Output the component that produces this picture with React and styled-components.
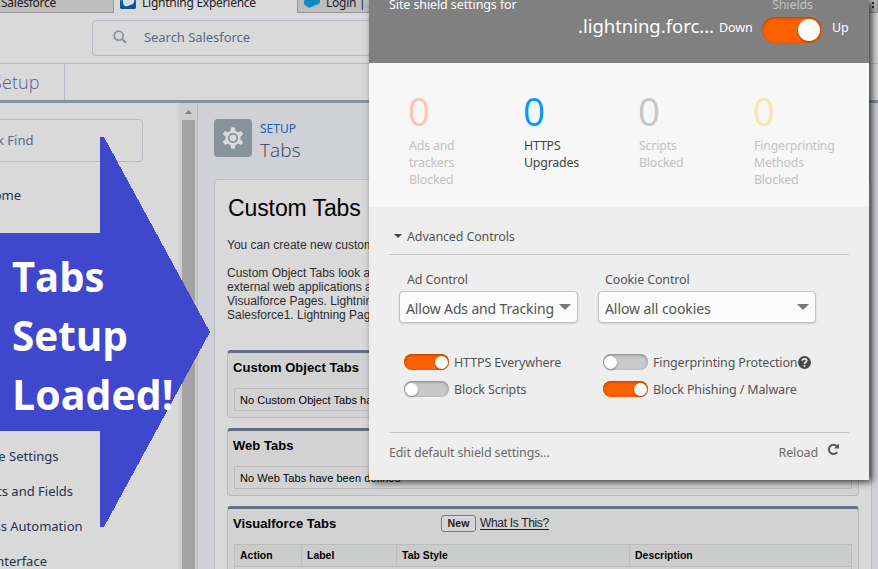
import React from "react";
import styled, { createGlobalStyle, css } from "styled-components";

const GlobalStyle = createGlobalStyle`
  * { box-sizing: border-box; }
  html, body { margin: 0; padding: 0; overflow: hidden; }
  button { font: inherit; }
`;

const ui = '"Noto Sans", "Open Sans", sans-serif';
const arial = '"Liberation Sans", Arial, sans-serif';

const Page = styled.div`
  position: relative;
  display: flex;
  flex-direction: column;
  width: 878px;
  height: 569px;
  overflow: hidden;
  background: #d9d9d9;
  font-family: ${ui};
  white-space: nowrap;
`;

/* Browser tabs */
const TabStrip = styled.div`
  display: flex;
  flex: none;
  height: 13px;
`;
const BrowserTab = styled.div`
  display: flex;
  flex: none;
  align-items: flex-end;
  gap: 6px;
  width: ${(p) => p.$w}px;
  height: 13px;
  padding: 0 0 2px ${(p) => p.$pad}px;
  overflow: hidden;
  color: #1b1b1b;
  font: 12px/17px ${ui};
  letter-spacing: -0.25px;
  ${(p) =>
    !p.$active &&
    css`
      background: #bdbdbd;
      border: solid #999;
      border-width: 0 1px 1px ${p.$first ? 0 : 1}px;
      padding-bottom: 1px;
    `}
  svg { flex: none; margin-bottom: 2px; }
`;
const WindowMenu = styled.svg`
  margin-left: auto;
`;

/* Global header */
const SearchRow = styled.div`
  flex: none;
  height: 51px;
  padding: 7px 0 0 92px;
  border-bottom: 1px solid #b3b9c8;
`;
const SearchBox = styled.div`
  display: flex;
  align-items: center;
  gap: 17px;
  width: 520px;
  height: 36px;
  padding: 0 0 2px 20px;
  border: 1px solid #b1b8c8;
  border-radius: 4px;
  color: #5a6a8c;
  font-size: 13px;
  letter-spacing: -0.05px;
`;
const NavRow = styled.div`
  flex: none;
  height: 39px;
  border-bottom: 3px solid #87929a;
`;
const NavName = styled.div`
  width: 65px;
  height: 36px;
  border-right: 1px solid #b3b9c8;
  color: #52648a;
  font: 300 18px/36px "Open Sans", sans-serif;
  letter-spacing: 0.1px;
  span { margin-left: -8px; }
`;

/* Body */
const Body = styled.div`
  display: flex;
  flex: 1;
  min-height: 0;
`;
const Sidebar = styled.div`
  width: 178px;
  padding-top: 16px;
  overflow: hidden;
`;
const QuickFind = styled.div`
  width: 163px;
  height: 43px;
  margin-left: -20px;
  padding-left: 16px;
  border: 1px solid #b5bcc4;
  border-radius: 4px;
  color: #54698d;
  font-size: 13px;
  line-height: 41px;
`;
const SideList = styled.div`
  padding-top: 16px;
  color: #22334f;
  font-size: 13px;
`;
const SideItem = styled.div`
  height: 35px;
  margin-left: ${(p) => p.$shift || 0}px;
  margin-top: ${(p) => p.$gap || 0}px;
  line-height: 35px;
`;
const Scrollbar = styled.div`
  display: flex;
  flex: none;
  flex-direction: column;
  align-items: center;
  width: 20px;
  padding: 7px 1px 0 0;
  border-left: 2px solid #cfd1d7;
  border-right: 1px solid #b6bbc0;
  background: #cdcdcd;
  svg { flex: none; }
`;
const ScrollThumb = styled.div`
  flex: 1;
  width: 13px;
  margin-top: 6px;
  background: #a3a3a3;
`;
const Main = styled.div`
  flex: 1;
  padding: 16px 6px 0 16px;
  background: #cfd1d6;
`;
const Title = styled.div`
  display: flex;
  height: 38px;
  gap: 8px;
`;
const IconTile = styled.div`
  display: grid;
  place-items: center;
  width: 38px;
  height: 38px;
  border-radius: 4px;
  background: #87929a;
`;
const TitleText = styled.div`
  display: flex;
  flex-direction: column;
`;
const Eyebrow = styled.div`
  color: #1d5cba;
  font: 12px/19px ${ui};
`;
const Heading = styled.div`
  color: #333f5c;
  font: 300 19px/24px "Open Sans", sans-serif;
  letter-spacing: 0.1px;
`;
const Card = styled.div`
  width: 658px;
  height: 410px;
  margin-top: 22px;
  padding: 14px 12px 0;
  border: 1px solid #b8bdc4;
  border-radius: 4px;
  background: #d9d9d9;
  font-family: ${arial};
`;
const CardTitle = styled.div`
  padding-left: 1px;
  color: #000;
  font-size: 23px;
  line-height: 28px;
  letter-spacing: -0.1px;
`;
const Copy = styled.div`
  margin-top: ${(p) => p.$top}px;
  color: #2c2c2c;
  font-size: 12px;
  line-height: 14px;
`;
const Section = styled.div`
  width: 632px;
  height: ${(p) => p.$h}px;
  margin-top: ${(p) => p.$top}px;
  padding: 0 6px;
  border: 1px solid #b9b9b9;
  border-top: 3px solid #656e85;
  border-radius: 4px;
  background: #d2d2d2;
`;
const SectionHead = styled.div`
  display: flex;
  align-items: center;
  height: 35px;
  margin-left: -1px;
  padding-bottom: 6px;
`;
const SectionTitle = styled.div`
  width: 208px;
  color: #000;
  font-weight: bold;
  font-size: 13px;
  letter-spacing: 0.03px;
`;
const NewButton = styled.button`
  width: 35px;
  height: 17px;
  padding: 0;
  border: 1px solid #7c7c7c;
  border-radius: 3px;
  background: #d6d6d6;
  color: #222;
  font: bold 10.6px/15px ${arial};
`;
const HelpLink = styled.a`
  margin-left: 4px;
  border-bottom: 1px solid #222;
  color: #222;
  font-size: 12px;
  line-height: 12px;
  letter-spacing: -0.33px;
`;
const Empty = styled.div`
  height: 23px;
  padding-left: 5px;
  border: 1px solid #bcbcbc;
  color: #000;
  font-size: 11px;
  line-height: 23px;
  letter-spacing: 0.05px;
`;
const Table = styled.div`
  display: grid;
  grid-template-columns: 67px 95px 233px 1fr;
  height: 40px;
  border: 1px solid #bcbcbc;
`;
const Th = styled.div`
  height: 22px;
  padding-left: 5px;
  border-bottom: 1px solid #bcbcbc;
  border-right: 1px solid #bcbcbc;
  background: #cbcdcc;
  color: #000;
  font-weight: bold;
  font-size: 10.4px;
  line-height: 21px;
  letter-spacing: 0.05px;
  &:last-child { border-right: 0; }
`;

/* Callout arrow */
const Callout = styled.div`
  position: absolute;
  left: 0;
  top: 136px;
  width: 211px;
  height: 392px;
  > svg { position: absolute; inset: 0; }
`;
const CalloutText = styled.div`
  position: relative;
  padding: 110px 0 0 12px;
  color: #fff;
  font: bold 42px/59px "Open Sans", sans-serif;
`;
const CalloutLine = styled.div`
  width: max-content;
  transform: scaleX(${(p) => p.$sx});
  transform-origin: 0 50%;
`;

/* Shields popup */
const Popup = styled.div`
  position: absolute;
  left: 369px;
  top: 0;
  width: 500px;
  height: 480px;
  background: #eee;
  box-shadow: 3px 2px 7px rgba(0, 0, 0, 0.75);
  color: #555;
  font-family: ${ui};
  letter-spacing: -0.15px;
`;
const PopupHead = styled.div`
  display: flex;
  flex-direction: column;
  height: 63px;
  background: #808080;
  color: #fff;
  font-size: 12.5px;
  letter-spacing: -0.1px;
`;
const HeadLabels = styled.div`
  display: flex;
  justify-content: space-between;
  height: 14px;
  padding: 0 56px 0 20px;
  line-height: 18px;
  margin-top: -4px;
  span:last-child { color: #c4c4c4; }
`;
const HeadRow = styled.div`
  display: flex;
  align-items: center;
  height: 36px;
  padding-top: 4px;
  padding-left: 209px;
`;
const Host = styled.div`
  width: 141px;
  font-size: 18.5px;
  line-height: 28px;
  margin-top: -8px;
  letter-spacing: -0.03px;
`;
const HeadWord = styled.div`
  width: ${(p) => p.$w}px;
  padding-left: ${(p) => p.$pad || 0}px;
  margin-top: -4px;
  line-height: 18px;
`;
const Toggle = styled.div`
  display: flex;
  flex: none;
  align-items: center;
  justify-content: ${(p) => (p.$on ? "flex-end" : "flex-start")};
  width: ${(p) => (p.$large ? 60 : 45)}px;
  height: ${(p) => (p.$large ? 26 : 16)}px;
  padding: 0 ${(p) => (p.$large ? 2 : 1)}px;
  border-radius: 13px;
  background: ${(p) => (p.$on ? "#ff6000" : "#c9c9c9")};
  box-shadow: inset 0 1px 3px ${(p) => (p.$on ? "#a83f00" : "#808080")};
  &::after {
    content: "";
    width: ${(p) => (p.$large ? 22 : 13)}px;
    height: ${(p) => (p.$large ? 22 : 13)}px;
    border-radius: 50%;
    background: #fff;
    box-shadow: 0 1px 2px rgba(0, 0, 0, 0.35);
  }
`;
const Stats = styled.div`
  display: flex;
  height: 144px;
  padding: 26px 0 0 40px;
  background: #f7f7f7;
`;
const Stat = styled.div`
  width: 115px;
  color: ${(p) => (p.$live ? "#444" : "#c2c2c2")};
  font-size: 12.4px;
  line-height: 17px;
  letter-spacing: -0.2px;
`;
const Count = styled.div`
  height: 48px;
  margin-left: -1px;
  color: ${(p) => p.$color};
  font: 400 38.5px/45px "Open Sans", ${ui};
`;
const Controls = styled.div`
  padding: 19px 20px 0;
  font-size: 12.5px;
`;
const Disclosure = styled.div`
  display: flex;
  align-items: center;
  gap: 5px;
  height: 29px;
  padding: 0 0 7px 5px;
  border-bottom: 1px solid #c8c8c8;
  svg { margin-top: -2px; }
`;
const Selects = styled.div`
  display: flex;
  gap: 20px;
  padding: 15px 0 0 10px;
`;
const Field = styled.div`
  width: ${(p) => p.$w}px;
  > label { display: block; padding-left: ${(p) => p.$ind}px; line-height: 20px; margin-bottom: 1px; }
`;
const Select = styled.div`
  display: flex;
  align-items: center;
  justify-content: space-between;
  height: 32px;
  padding: 0 6px;
  border: 1px solid #c4c4c4;
  border-radius: 4px;
  background: #fbfbfb;
  box-shadow: 0 1px 2px rgba(0, 0, 0, 0.15);
  font-size: 14px;
  letter-spacing: ${(p) => p.$ls}px;
  span { padding-top: 3px; }
`;
const Switches = styled.div`
  display: grid;
  grid-template-columns: 199px 1fr;
  grid-auto-rows: 27px;
  height: 83px;
  margin-top: 26px;
  padding-left: 15px;
`;
const SwitchRow = styled.div`
  display: flex;
  align-items: center;
  gap: 5px;
  svg { margin-left: -4px; margin-top: -1px; }
  ${Toggle} { margin-top: -1px; }
`;
const Footer = styled.div`
  display: flex;
  justify-content: space-between;
  padding: 10px 9px 0 0;
  border-top: 1px solid #c8c8c8;
  color: #6b6b6b;
  line-height: 20px;
`;
const Reload = styled.div`
  display: flex;
  gap: 9px;
`;

const Cloud = ({ boxed }) => (
  <svg width="16" height="16" viewBox="0 0 16 16">
    {boxed && <rect width="16" height="16" rx="2" fill="#1768a8" />}
    {boxed && <path d="M0 9h16v5q0 2-2 2H2q-2 0-2-2z" fill="#0c569c" />}
    <path
      d={boxed ? "M3 9Q2 6 5 6q3-3 6 0q4 0 3 3q-1 3-4 3q-3 2-5 1q-2-1-2-4z" : "M0 9Q0 6 4 6h9q4 0 3 3q-1 3-5 3q-2 2-4 2q-3 2-4-1Q0 13 0 9z"}
      fill={boxed ? "#d3dfe8" : "#0c8bc4"}
    />
  </svg>
);

const Caret = ({ w, h, color, up }) => (
  <svg width={w} height={h} viewBox="0 0 10 5" preserveAspectRatio="none">
    <path d={up ? "M0 5h10L5 0z" : "M0 0h10L5 5z"} fill={color} />
  </svg>
);

const GearIcon = () => (
  <svg width="22" height="22" viewBox="0 0 22 22" fill="#d9dbdd">
    {[0, 60, 120, 180, 240, 300].map((a) => (
      <path key={a} d="M8.2 6L9 1Q9.100 .2 10 .2h2Q12.900 .2 13 1l.8 5z" transform={`rotate(${a} 11 11)`} />
    ))}
    <circle cx="11" cy="11" r="7.600" />
    <circle cx="11" cy="11" r="4.200" fill="#d9dbdd" stroke="#87929a" strokeWidth="1.800" />
  </svg>
);

const stats = [
  { color: "#fcc4b4", lines: ["Ads and", "trackers", "Blocked"] },
  { color: "#0796ff", lines: ["HTTPS", "Upgrades"], live: true },
  { color: "#c6c6c6", lines: ["Scripts", "Blocked"] },
  { color: "#fbe6a9", lines: ["Fingerprinting", "Methods", "Blocked"] },
];

export default function App() {
  return (
    <Page>
      <GlobalStyle />
      <TabStrip>
        <BrowserTab $w={114} $pad={1} $first>Salesforce</BrowserTab>
        <BrowserTab $w={183} $pad={6} $active><Cloud boxed />Lightning Experience</BrowserTab>
        <BrowserTab $w={581} $pad={6}>
          <Cloud />Login | S
          <WindowMenu width="6" height="14" viewBox="0 0 6 14" fill="#333">
            <rect x="1" y="3" width="2" height="2" /><rect x="1" y="7" width="2" height="2" /><rect x="1" y="11" width="2" height="2" />
          </WindowMenu>
        </BrowserTab>
      </TabStrip>
      <SearchRow>
        <SearchBox>
          <svg width="14" height="14" viewBox="0 0 14 14" fill="none" stroke="#87929f" strokeWidth="1.700">
            <circle cx="5.700" cy="5.700" r="4.500" /><path d="M9 9l4 3.800" strokeWidth="2" />
          </svg>
          Search Salesforce
        </SearchBox>
      </SearchRow>
      <NavRow><NavName><span>Setup</span></NavName></NavRow>
      <Body>
        <Sidebar>
          <QuickFind>k Find</QuickFind>
          <SideList>
            <SideItem $shift={-16}>Home</SideItem>
            <SideItem $shift={-36} $gap={226}>Mobile Settings</SideItem>
            <SideItem $shift={-38}>Objects and Fields</SideItem>
            <SideItem $shift={-40}>Process Automation</SideItem>
            <SideItem $shift={-40}>User Interface</SideItem>
          </SideList>
        </Sidebar>
        <Scrollbar>
          <Caret w={7} h={4} color="#858585" up />
          <ScrollThumb />
        </Scrollbar>
        <Main>
          <Title>
            <IconTile><GearIcon /></IconTile>
            <TitleText><Eyebrow>SETUP</Eyebrow><Heading>Tabs</Heading></TitleText>
          </Title>
          <Card>
            <CardTitle>Custom Tabs</CardTitle>
            <Copy $top={16}>You can create new custom tabs</Copy>
            <Copy $top={14}>
              <div>Custom Object Tabs look and</div>
              <div>external web applications and</div>
              <div>Visualforce Pages. Lightning</div>
              <div>Salesforce1. Lightning Page</div>
            </Copy>
            <Section $h={68} $top={28}>
              <SectionHead><SectionTitle>Custom Object Tabs</SectionTitle></SectionHead>
              <Empty>No Custom Object Tabs have been defined</Empty>
            </Section>
            <Section $h={68} $top={10}>
              <SectionHead><SectionTitle>Web Tabs</SectionTitle></SectionHead>
              <Empty>No Web Tabs have been defined</Empty>
            </Section>
            <Section $h={80} $top={10}>
              <SectionHead>
                <SectionTitle>Visualforce Tabs</SectionTitle>
                <NewButton>New</NewButton>
                <HelpLink>What Is This?</HelpLink>
              </SectionHead>
              <Table><Th>Action</Th><Th>Label</Th><Th>Tab Style</Th><Th>Description</Th></Table>
            </Section>
          </Card>
        </Main>
      </Body>

      <Callout>
        <svg width="211" height="392" viewBox="0 0 211 392">
          <path d="M0 97H100V1H104L210 196L104 391H100V295H0z" fill="#3f48cc" shapeRendering="crispEdges" />
        </svg>
        <CalloutText>
          <CalloutLine $sx={0.95}>Tabs</CalloutLine>
          <CalloutLine $sx={0.963}>Setup</CalloutLine>
          <CalloutLine $sx={0.978}>Loaded!</CalloutLine>
        </CalloutText>
      </Callout>

      <Popup>
        <PopupHead>
          <HeadLabels><span>Site shield settings for</span><span>Shields</span></HeadLabels>
          <HeadRow>
            <Host>.lightning.forc...</Host>
            <HeadWord $w={43}>Down</HeadWord>
            <Toggle $on $large />
            <HeadWord $w={37} $pad={10}>Up</HeadWord>
          </HeadRow>
        </PopupHead>
        <Stats>
          {stats.map((s) => (
            <Stat key={s.color} $live={s.live}>
              <Count $color={s.color}>0</Count>
              {s.lines.map((l) => <div key={l}>{l}</div>)}
            </Stat>
          ))}
        </Stats>
        <Controls>
          <Disclosure><Caret w={8} h={4} color="#444" />Advanced Controls</Disclosure>
          <Selects>
            <Field $w={179} $ind={8}>
              <label>Ad Control</label>
              <Select $ls={-0.15}><span>Allow Ads and Tracking</span><Caret w={12} h={6} color="#777" /></Select>
            </Field>
            <Field $w={218} $ind={7}>
              <label>Cookie Control</label>
              <Select $ls={-0.08}><span>Allow all cookies</span><Caret w={12} h={6} color="#777" /></Select>
            </Field>
          </Selects>
          <Switches>
            <SwitchRow><Toggle $on />HTTPS Everywhere</SwitchRow>
            <SwitchRow>
              <Toggle />Fingerprinting Protection
              <svg width="13" height="13" viewBox="0 0 13 13" fill="none">
                <circle cx="6.500" cy="6.500" r="6.500" fill="#484848" />
                <path d="M4.300 4.800Q4.300 2.800 6.500 2.800T8.700 4.700Q8.700 5.700 7.500 6.300Q6.500 6.800 6.500 7.900M6.500 9v1.700" stroke="#eee" strokeWidth="1.700" />
              </svg>
            </SwitchRow>
            <SwitchRow><Toggle />Block Scripts</SwitchRow>
            <SwitchRow><Toggle $on />Block Phishing / Malware</SwitchRow>
          </Switches>
          <Footer>
            <span>Edit default shield settings...</span>
            <Reload>
              Reload
              <svg width="13" height="13" viewBox="0 0 13 13" fill="none">
                <path d="M10.300 9A4.600 4.600 0 1 1 9.800 3.200" stroke="#555" strokeWidth="2" />
                <path d="M12 .5v5H7z" fill="#555" />
              </svg>
            </Reload>
          </Footer>
        </Controls>
      </Popup>
    </Page>
  );
}
